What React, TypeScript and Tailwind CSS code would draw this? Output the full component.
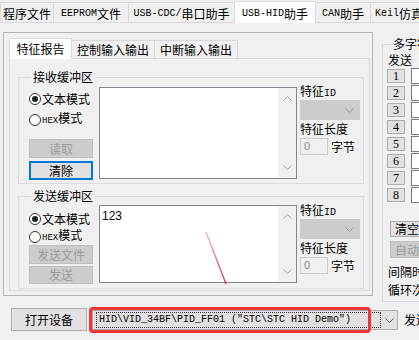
import React from "react";

const cjk = "font-['Noto_Sans_CJK_SC','Microsoft_YaHei',sans-serif]";
const mono = "font-['Liberation_Mono','Noto_Sans_CJK_SC',monospace]";

// latin part rendered in the narrow SimSun-like face
const M = ({ children, small }: { children: React.ReactNode; small?: boolean }) => (
  <span className={`${mono} ${small ? "text-[9px]" : "text-[10px]"}`}>{children}</span>
);

const Chevron = ({ up, color = "#a6a6a6" }: { up?: boolean; color?: string }) => (
  <svg width="9" height="5" viewBox="0 0 9 5">
    <path
      d={up ? "M0.5 4.5 L4.5 0.5 L8.5 4.5" : "M0.5 0.5 L4.5 4.5 L8.5 0.5"}
      fill="none"
      stroke={color}
      strokeWidth="1"
    />
  </svg>
);

const Radio = ({ checked, children }: { checked?: boolean; children: React.ReactNode }) => (
  <div className="flex items-center h-[13px] leading-[13px]">
    <span className="w-[12px] h-[12px] rounded-full border border-[#333333] bg-white flex items-center justify-center shrink-0">
      {checked && <span className="w-[6px] h-[6px] rounded-full bg-[#222222]" />}
    </span>
    <span className="ml-[1px] whitespace-nowrap">{children}</span>
  </div>
);

const Memo = ({ className, children }: { className: string; children?: React.ReactNode }) => (
  <div className={`flex shrink-0 bg-white border border-[#828790] ${className}`}>
    <div className="flex-1 px-[2px] pt-[3px] font-['Liberation_Sans',sans-serif] text-[12px] leading-[14px]">
      {children}
    </div>
    <div className="w-[18px] bg-[#f0f0f0] flex flex-col items-center justify-between py-[8px]">
      <Chevron up />
      <Chevron />
    </div>
  </div>
);

const ReportSide = () => (
  <div className="ml-[3px] w-[60px] shrink-0 flex flex-col">
    <div className="h-[14px] leading-[14px] whitespace-nowrap">
      特征<M>ID</M>
    </div>
    <div className="mt-[2px] h-[20px] bg-[#cccccc] border border-[#cccccc] flex items-center justify-end pr-[5px]">
      <Chevron color="#9a9a9a" />
    </div>
    <div className="mt-[2px] h-[14px] leading-[14px] whitespace-nowrap">特征长度</div>
    <div className="mt-[2px] flex items-center">
      <div className="w-[28px] h-[17px] border border-[#cccccc] bg-[#f0f0f0] text-[#8c8c8c] font-['Liberation_Sans',sans-serif] text-[11px] leading-[15px] pl-[3px]">
        0
      </div>
      <span className="ml-[3px] leading-[14px]">字节</span>
    </div>
  </div>
);

const btnOff =
  "w-[64px] bg-[#cccccc] border border-[#bfbfbf] text-[#9c9c9c] flex items-center justify-center leading-[14px]";

const tabOff =
  "shrink-0 h-[20px] border border-l-0 border-b-0 border-[#d9d9d9] flex items-center justify-center pt-[3px] leading-[14px]";

export default function App() {
  return (
    <div className={`relative w-[419px] h-[340px] overflow-hidden bg-[#f0f0f0] text-black text-[12px] ${cjk}`}>
      {/* top tab strip */}
      <div className="h-[23px] flex items-end border-b border-[#d9d9d9] whitespace-nowrap">
        <div className="shrink-0 w-[54px] h-[20px] border border-b-0 border-[#d9d9d9] flex items-center justify-center pt-[3px] leading-[14px]">
          程序文件
        </div>
        <div className={`w-[75px] ${tabOff}`}>
          <M>EEPROM</M>文件
        </div>
        <div className={`w-[106px] ${tabOff}`}>
          <M>USB-CDC/</M>串口助手
        </div>
        <div className="shrink-0 relative z-10 w-[82px] h-[22px] -mb-px -ml-px bg-white border border-b-0 border-[#d9d9d9] flex items-center justify-center pt-[3px] leading-[14px]">
          <M>USB-HID</M>助手
        </div>
        <div className={`w-[55px] ${tabOff}`}>
          <M>CAN</M>助手
        </div>
        <div className="shrink-0 w-[70px] h-[20px] border border-l-0 border-b-0 border-[#d9d9d9] flex items-center pl-[4px] pt-[3px] leading-[14px]">
          <M>Keil</M>仿真设置
        </div>
      </div>

      {/* main area */}
      <div className="h-[283px] flex items-start">
        {/* left frame with inner tabs */}
        <div className="shrink-0 ml-[3px] mt-[9px] w-[370px] h-[264px] border border-[#b4b4b4] pl-[5px] pt-[5px]">
          <div className="h-[20px] flex items-end whitespace-nowrap">
            <div className="shrink-0 relative z-10 w-[63px] h-[21px] -mb-px bg-white border border-b-0 border-[#d9d9d9] flex items-center justify-center leading-[14px]">
              特征报告
            </div>
            <div className="shrink-0 w-[83px] h-[18px] border border-l-0 border-b-0 border-[#d9d9d9] flex items-center justify-center leading-[14px]">
              控制输入输出
            </div>
            <div className="shrink-0 w-[83px] h-[18px] border border-l-0 border-b-0 border-[#d9d9d9] flex items-center justify-center leading-[14px]">
              中断输入输出
            </div>
          </div>

          <div className="w-[361px] h-[233px] border border-[#d9d9d9] pl-[8px] pt-[11px]">
            {/* receive buffer */}
            <fieldset className="w-[346px] h-[114px] border border-[#dcdcdc]">
              <legend className="ml-[12px] px-[2px] leading-[14px]">接收缓冲区</legend>
              <div className="flex pl-[10px]">
                <div className="w-[64px] shrink-0 flex flex-col">
                  <div className="mt-[8px]">
                    <Radio checked>文本模式</Radio>
                  </div>
                  <div className="mt-[8px]">
                    <Radio>
                      <M small>HEX</M>模式
                    </Radio>
                  </div>
                  <div className={`mt-[13px] h-[19px] ${btnOff}`}>读取</div>
                  <div className="mt-[3px] w-[64px] h-[19px] bg-[#e1e1e1] border-2 border-[#0078d7] flex items-center justify-center leading-[14px]">
                    清除
                  </div>
                </div>
                <Memo className="ml-[6px] mt-[3px] w-[198px] h-[92px]" />
                <ReportSide />
              </div>
            </fieldset>

            {/* send buffer */}
            <fieldset className="mt-[5px] w-[346px] h-[100px] border border-[#dcdcdc]">
              <legend className="ml-[12px] px-[2px] leading-[14px]">发送缓冲区</legend>
              <div className="flex pl-[10px]">
                <div className="w-[64px] shrink-0 flex flex-col">
                  <div className="mt-[9px]">
                    <Radio checked>文本模式</Radio>
                  </div>
                  <div className="mt-[5px]">
                    <Radio>
                      <M small>HEX</M>模式
                    </Radio>
                  </div>
                  <div className={`mt-[2px] h-[19px] ${btnOff}`}>发送文件</div>
                  <div className={`mt-[2px] h-[18px] ${btnOff}`}>发送</div>
                </div>
                <Memo className="ml-[6px] mt-[2px] w-[198px] h-[78px]">123</Memo>
                <ReportSide />
              </div>
            </fieldset>
          </div>
        </div>

        {/* multi-string send group */}
        <fieldset className="ml-[9px] mt-[14px] w-[60px] h-[265px] border border-[#cfdbe7] shrink-0">
          <legend className="ml-[9px] px-[1px] leading-[14px] whitespace-nowrap">多字符串发送</legend>
          <div className="pl-[5px] mt-[2px] leading-[14px] whitespace-nowrap">发送</div>
          <div className="mt-[1px] flex flex-col gap-[1px]">
            {["1", "2", "3", "4", "5", "6", "7", "8"].map((n) => (
              <div key={n} className="h-[16px] flex items-center">
                <div className="shrink-0 ml-[4px] w-[18px] h-[14px] bg-[#e1e1e1] border border-[#adadad] flex items-center justify-center font-['Liberation_Serif',serif] text-[12px] leading-[12px]">
                  {n}
                </div>
                <div className="shrink-0 ml-[6px] w-[40px] h-[16px] bg-white border border-[#7a7a7a]" />
              </div>
            ))}
          </div>
          <div className="mt-[18px] ml-[7px] w-[50px] h-[16px] bg-[#e1e1e1] border border-[#adadad] pl-[4px] leading-[14px] whitespace-nowrap">
            清空
          </div>
          <div className="mt-[4px] ml-[7px] w-[50px] h-[17px] bg-[#cccccc] border border-[#bfbfbf] text-[#9c9c9c] pl-[4px] leading-[15px] whitespace-nowrap">
            自动循环
          </div>
          <div className="mt-[7px] pl-[5px] leading-[14px] whitespace-nowrap">间隔时间</div>
          <div className="mt-[4px] pl-[5px] leading-[14px] whitespace-nowrap">循环次数</div>
        </fieldset>
      </div>

      {/* bottom row */}
      <div className="flex items-start pt-[2px]">
        <div className="shrink-0 ml-[11px] w-[76px] h-[23px] bg-[#e1e1e1] border border-[#adadad] flex items-center justify-center leading-[14px]">
          打开设备
        </div>
        <div className="shrink-0 ml-[5px] mt-[2px] w-[306px] h-[20px] bg-[#e1e1e1] border border-[#adadad] flex items-center">
          <div className="shrink-0 ml-[3px] w-[285px] h-[16px] border border-dotted border-[#333333] flex items-center pl-[2px] whitespace-nowrap overflow-hidden">
            <span className={`${mono} text-[10px] leading-[14px]`}>HID\VID_34BF\PID_FF01 ("STC\STC HID Demo")</span>
          </div>
          <div className="ml-[4px]">
            <Chevron color="#606060" />
          </div>
        </div>
        <div className="shrink-0 ml-[6px] mt-[5px] leading-[14px] whitespace-nowrap">发送</div>
      </div>

      {/* red highlight annotation */}
      <div className="absolute left-[89px] top-[307px] w-[282px] h-[26px] border-[3px] border-[#ef3535] rounded-[4px] pointer-events-none" />
      <svg className="absolute left-0 top-0 pointer-events-none" width="419" height="340">
        <defs>
          <linearGradient id="ln" x1="0" y1="0" x2="0" y2="1">
            <stop offset="0" stopColor="#f6b3ba" />
            <stop offset="1" stopColor="#e02a3a" />
          </linearGradient>
        </defs>
        <line x1="206" y1="232" x2="226" y2="284" stroke="url(#ln)" strokeWidth="1.3" />
      </svg>
    </div>
  );
}
